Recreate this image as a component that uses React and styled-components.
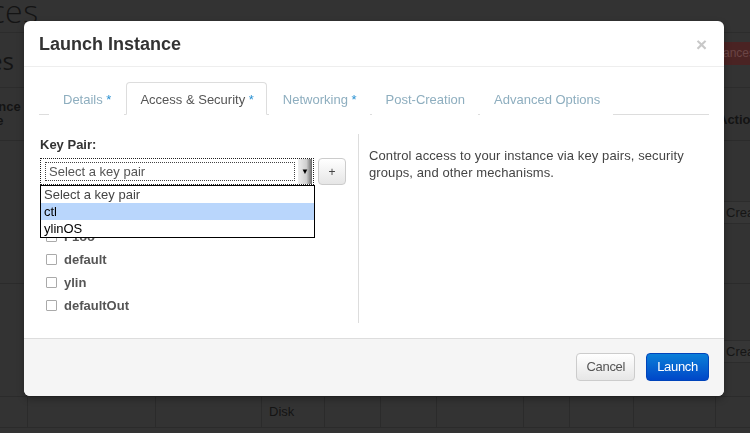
import React from 'react';
import styled, { createGlobalStyle } from 'styled-components';

const GlobalStyle = createGlobalStyle`
  html, body {
    margin: 0;
    padding: 0;
    background: #333;
    overflow: hidden;
  }
  body {
    font-family: "Liberation Sans", Arial, Helvetica, sans-serif;
    font-size: 13px;
  }
  * {
    box-sizing: border-box;
  }
`;

const COLS = '67px 128px 106px 63px 56px 56px 87px 46px 64px 82px 36px';

const tabs = [
  { label: 'Details', required: true },
  { label: 'Access & Security', required: true, active: true },
  { label: 'Networking', required: true },
  { label: 'Post-Creation' },
  { label: 'Advanced Options' },
];

const keyPairs = ['Select a key pair', 'ctl', 'ylinOS'];
const groups = ['F1oo', 'default', 'ylin', 'defaultOut'];

/* backdrop page, dimmed behind the modal */

const Page = styled.div`
  width: 750px;
  height: 433px;
  display: flex;
  flex-direction: column;
  overflow: hidden;
  color: #141414;
`;

const PageTitle = styled.div`
  height: 33px;
  border-bottom: 1px solid #2c2c2c;
  font-size: 32px;
  font-weight: 300;
  line-height: 22px;
  margin-left: -102px;
  font-family: "Open Sans", "Liberation Sans", sans-serif;
  letter-spacing: 0.5px;
`;

const SubBar = styled.div`
  height: 55px;
  border-bottom: 1px solid #2c2c2c;
  display: flex;
  align-items: center;
  justify-content: space-between;
`;

const SubTitle = styled.div`
  font-family: "Open Sans", "Liberation Sans", sans-serif;
  font-size: 24px;
  margin-left: -92px;
  margin-top: 0;
`;

const DangerButton = styled.div`
  height: 23px;
  margin-top: -14px;
  margin-right: -13px;
  padding: 0 8px;
  background: #4a2323;
  border-radius: 3px;
  color: #6b4545;
  font-size: 12px;
  line-height: 23px;
  white-space: nowrap;
`;

const Table = styled.div`
  margin-left: -40px;
  display: flex;
  flex-direction: column;
`;

const Row = styled.div`
  display: grid;
  grid-template-columns: ${COLS};
  height: ${p => p.$h}px;
  border-bottom: 1px solid #2b2b2b;
`;

const Cell = styled.div`
  border-left: ${p => (p.$line ? '1px solid #2b2b2b' : 'none')};
  font-weight: ${p => (p.$bold ? 'bold' : 'normal')};
  font-size: 13px;
  line-height: 14px;
  padding: ${p => p.$pad || '0 8px'};
  display: flex;
  align-items: ${p => p.$align || 'center'};
  white-space: ${p => (p.$wrap ? 'normal' : 'nowrap')};
`;

const GhostButton = styled.div`
  height: 23px;
  padding: 0 8px;
  border: 1px solid #2c2c2c;
  border-radius: 3px;
  background: #363636;
  color: #151515;
  line-height: 21px;
`;

/* modal */

const Modal = styled.div`
  position: fixed;
  left: 24px;
  top: 21px;
  width: 700px;
  background: #fff;
  border-radius: 6px;
  box-shadow: 0 3px 7px rgba(0, 0, 0, 0.3);
  display: flex;
  flex-direction: column;
  color: #333;
`;

const Header = styled.div`
  height: 46px;
  padding: 0 15px;
  border-bottom: 1px solid #eee;
  display: flex;
  align-items: center;
  justify-content: space-between;
`;

const Title = styled.h3`
  margin: 0;
  font-size: 18px;
  font-weight: bold;
  color: #333;
  padding-top: 1px;
`;

const Close = styled.span`
  font-size: 19px;
  font-weight: bold;
  color: #c8c8c8;
  margin-right: 2px;
  margin-top: 2px;
`;

const Body = styled.div`
  padding: 15px 15px 15px;
`;

const TabList = styled.ul`
  list-style: none;
  margin: 0;
  padding: 0 0 0 10px;
  height: 33px;
  display: flex;
  border-bottom: 1px solid #ddd;
`;

const Tab = styled.li`
  height: 33px;
  margin-right: 2px;
  padding: 0 12px 0 13px;
  line-height: 33px;
  border: 1px solid ${p => (p.$active ? '#ddd' : 'transparent')};
  border-bottom-color: ${p => (p.$active ? '#fff' : 'transparent')};
  border-radius: 4px 4px 0 0;
  background: #fff;
  color: ${p => (p.$active ? '#555' : '#8eaebf')};
  font-size: 13px;
  white-space: nowrap;
`;

const Star = styled.span`
  color: #2a91d2;
  font-size: 13px;
`;

const Content = styled.div`
  margin-top: 19px;
  height: 189px;
  display: grid;
  grid-template-columns: 319px 1fr;
`;

const LeftCol = styled.div`
  position: relative;
  padding: 2px 0 0 1px;
`;

const RightCol = styled.div`
  border-left: 1px solid #ddd;
  padding: 13px 16px 0 10px;
  line-height: 17px;
  color: #444;
  letter-spacing: 0.1px;
`;

const Label = styled.div`
  font-weight: bold;
  color: #333;
  line-height: 18px;
  margin-bottom: 4px;
`;

const SelectRow = styled.div`
  display: flex;
  gap: 4px;
`;

const SelectBox = styled.div`
  width: 274px;
  height: 27px;
  border: 1px dotted #222;
  padding: 3px 1px 3px 4px;
  display: flex;
  gap: 3px;
  background: #fff;
`;

const SelectText = styled.div`
  flex: 1;
  border: 1px dotted #444;
  padding-left: 3px;
  color: #555;
  font-size: 13px;
  line-height: 17px;
`;

const SelectArrow = styled.div`
  width: 14px;
  margin: -3px 0;
  background: linear-gradient(to right, #eee, #cfcfcf 60%, #666 100%);
  display: flex;
  align-items: center;
  justify-content: center;
  font-size: 8px;
  color: #000;
`;

const AddButton = styled.div`
  width: 28px;
  height: 27px;
  border: 1px solid #ccc;
  border-radius: 4px;
  background: linear-gradient(#fff, #e6e6e6);
  color: #444;
  font-size: 12px;
  display: flex;
  align-items: center;
  justify-content: center;
`;

const Dropdown = styled.ul`
  position: absolute;
  left: 1px;
  top: 51px;
  width: 275px;
  margin: 0;
  padding: 0;
  list-style: none;
  background: #fff;
  border: 1px solid #000;
  z-index: 2;
`;

const Option = styled.li`
  height: 17px;
  padding-left: 3px;
  line-height: 17px;
  font-size: 13px;
  color: ${p => (p.$muted ? '#444' : '#000')};
  background: ${p => (p.$selected ? '#b9d6fc' : 'transparent')};
`;

const Groups = styled.div`
  margin-top: 18px;
`;

const CheckItem = styled.label`
  height: 23px;
  padding-left: 6px;
  display: flex;
  align-items: center;
  gap: 7px;
  font-weight: bold;
  color: #555;
`;

const Box = styled.span`
  width: 11px;
  height: 11px;
  border: 1px solid #aaa;
  border-radius: 1px;
  background: #fff;
`;

const Footer = styled.div`
  height: 58px;
  padding: 14px 15px;
  background: #f5f5f5;
  border-top: 1px solid #ddd;
  border-radius: 0 0 6px 6px;
  display: flex;
  justify-content: flex-end;
  gap: 11px;
`;

const Button = styled.div`
  height: 28px;
  padding: 0 ${p => p.$pad}px;
  border-radius: 4px;
  border: 1px solid ${p => (p.$primary ? '#0044bb' : '#ccc')};
  background: ${p => (p.$primary ? 'linear-gradient(#0a7fd8, #0047c8)' : 'linear-gradient(#fff, #e6e6e6)')};
  color: ${p => (p.$primary ? '#fff' : '#555')};
  font-size: 13px;
  line-height: 26px;
  letter-spacing: -0.3px;
`;

export default function App() {
  return (
    <>
      <GlobalStyle />
      <Page>
        <PageTitle>Instances</PageTitle>
        <SubBar>
          <SubTitle>Instances</SubTitle>
          <DangerButton>Terminate Instances</DangerButton>
        </SubBar>
        <Table>
          <Row $h={53}>
            <Cell $bold $wrap>Instance Name</Cell>
            <Cell /><Cell /><Cell /><Cell /><Cell /><Cell /><Cell /><Cell /><Cell />
            <Cell $bold $pad="12px 0 0 3px">Actions</Cell>
          </Row>
          <Row $h={143}>
            <Cell /><Cell /><Cell /><Cell /><Cell /><Cell /><Cell /><Cell /><Cell /><Cell />
            <Cell $pad="0 0 0 2px"><GhostButton>Create Snapshot</GhostButton></Cell>
          </Row>
          <Row $h={113}>
            <Cell /><Cell /><Cell /><Cell /><Cell /><Cell /><Cell /><Cell /><Cell /><Cell />
            <Cell $align="flex-start" $pad="56px 0 0 2px"><GhostButton>Create Snapshot</GhostButton></Cell>
          </Row>
          <Row $h={31}>
            <Cell /><Cell $line /><Cell $line /><Cell $line $pad="0 7px">Disk</Cell>
            <Cell $line /><Cell $line /><Cell $line /><Cell $line /><Cell $line /><Cell $line /><Cell $line />
          </Row>
        </Table>
      </Page>

      <Modal>
        <Header>
          <Title>Launch Instance</Title>
          <Close>×</Close>
        </Header>
        <Body>
          <TabList>
            {tabs.map(t => (
              <Tab key={t.label} $active={t.active}>
                {t.label}
                {t.required && <Star> *</Star>}
              </Tab>
            ))}
          </TabList>
          <Content>
            <LeftCol>
              <Label>Key Pair:</Label>
              <SelectRow>
                <SelectBox>
                  <SelectText>Select a key pair</SelectText>
                  <SelectArrow>▼</SelectArrow>
                </SelectBox>
                <AddButton>+</AddButton>
              </SelectRow>
              <Dropdown>
                {keyPairs.map((k, i) => (
                  <Option key={k} $muted={i === 0} $selected={k === 'ctl'}>{k}</Option>
                ))}
              </Dropdown>
              <Groups>
                <Label>Security Groups:</Label>
                {groups.map(g => (
                  <CheckItem key={g}>
                    <Box />
                    {g}
                  </CheckItem>
                ))}
              </Groups>
            </LeftCol>
            <RightCol>
              Control access to your instance via key pairs, security groups, and other mechanisms.
            </RightCol>
          </Content>
        </Body>
        <Footer>
          <Button $pad={9}>Cancel</Button>
          <Button $primary $pad={10}>Launch</Button>
        </Footer>
      </Modal>
    </>
  );
}
